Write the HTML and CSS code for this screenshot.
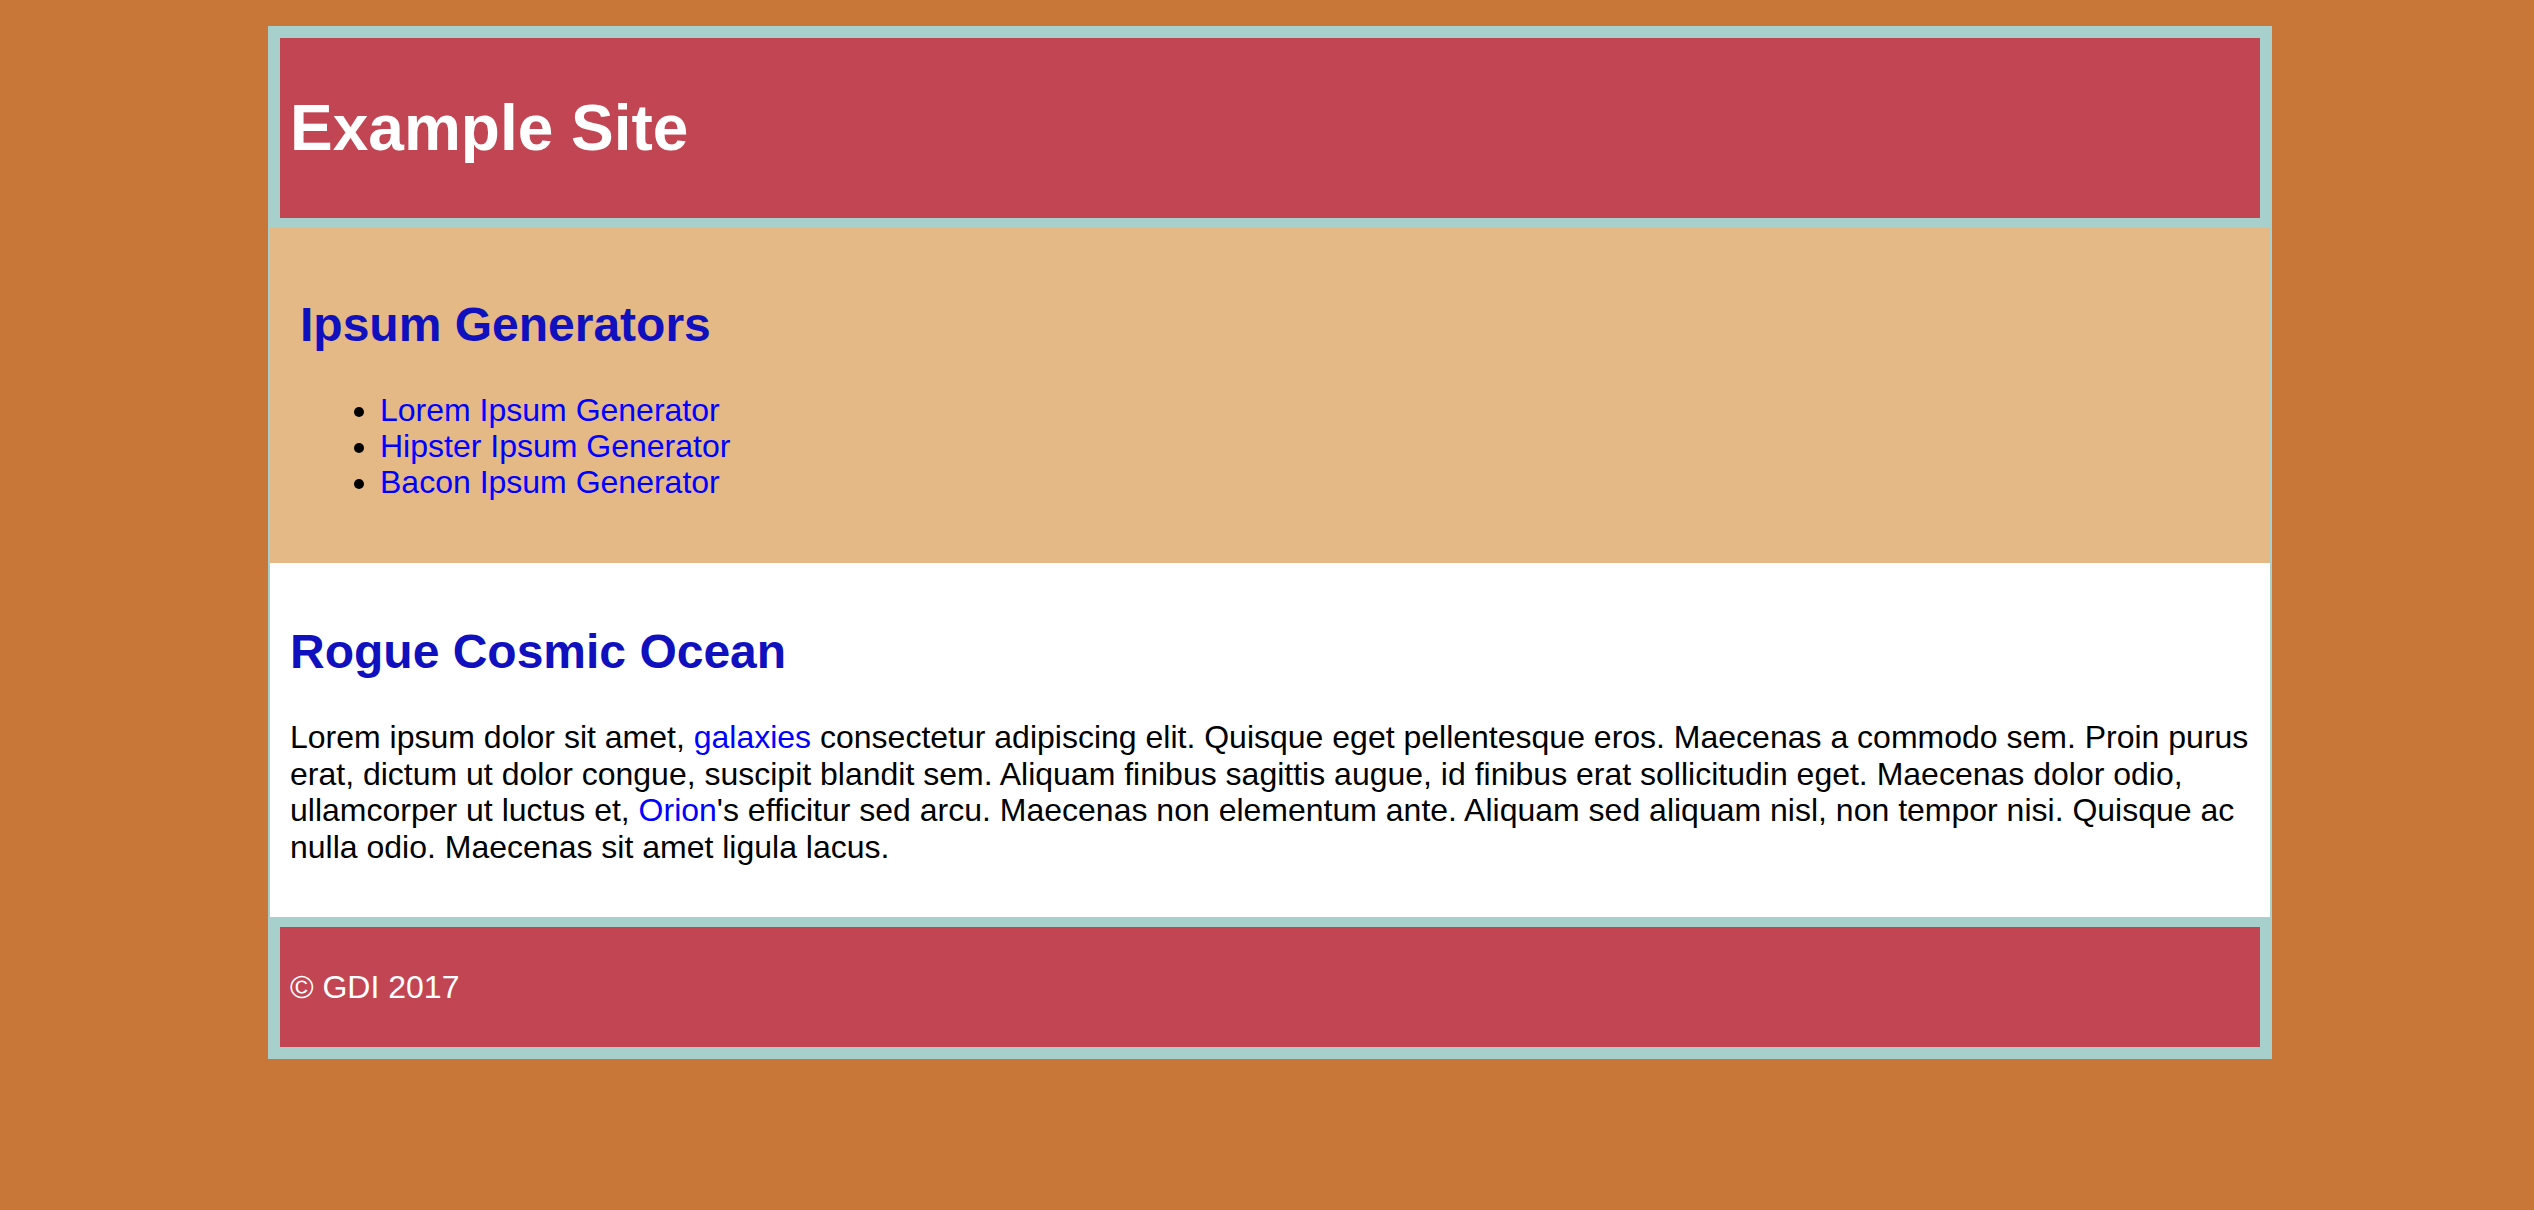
FILE: index.html
```html
<!DOCTYPE html>
<html lang="en">
<head>
<meta charset="utf-8">
<title>Example Site</title>
<link rel="stylesheet" href="styles.css">
</head>
<body>
<div class="page">
  <header class="site-header">
    <h1 class="site-title">Example Site</h1>
  </header>
  <nav class="site-nav">
    <h2 class="section-title">Ipsum Generators</h2>
    <ul class="nav-list">
      <li><a href="#">Lorem Ipsum Generator</a></li>
      <li><a href="#">Hipster Ipsum Generator</a></li>
      <li><a href="#">Bacon Ipsum Generator</a></li>
    </ul>
  </nav>
  <main class="site-main">
    <h2 class="section-title">Rogue Cosmic Ocean</h2>
    <p class="body-text">Lorem ipsum dolor sit amet, <a href="#">galaxies</a> consectetur adipiscing elit. Quisque eget pellentesque eros. Maecenas a commodo sem. Proin purus erat, dictum ut dolor congue, suscipit blandit sem. Aliquam finibus sagittis augue, id finibus erat sollicitudin eget. Maecenas dolor odio, ullamcorper ut luctus et, <a href="#">Orion</a>'s efficitur sed arcu. Maecenas non elementum ante. Aliquam sed aliquam nisl, non tempor nisi. Quisque ac nulla odio. Maecenas sit amet ligula lacus.</p>
  </main>
  <footer class="site-footer">
    <p class="copyright">&copy; GDI 2017</p>
  </footer>
</div>
</body>
</html>
```
FILE: styles.css
```css
html, body {
  margin: 0;
  padding: 0;
}

body {
  background: #c97639;
  font-family: "Liberation Sans", Arial, Helvetica, sans-serif;
  font-size: 32px;
  line-height: 36px;
  color: #000;
  min-height: 1210px;
}

.page {
  width: 2000px;
  margin: 26px 0 0 268px;
  border: 2px solid #a7d0cd;
}

.site-header,
.site-footer {
  background: #c24554;
  border: 10px solid #a7d0cd;
  padding: 10px;
  color: #fff;
}

.site-title {
  font-size: 64px;
  line-height: 74px;
  font-weight: bold;
  margin: 43px 0;
}

.site-nav {
  background: #e4b985;
  padding: 30px 30px 31px;
}

.site-main {
  background: #fff;
  padding: 22px 20px 20px;
}

.section-title {
  font-size: 48px;
  line-height: 54px;
  font-weight: bold;
  color: #1010be;
  margin: 40px 0;
}

.nav-list {
  margin: 32px 0;
  padding-left: 80px;
}

.nav-list li {
  line-height: 36px;
}

a {
  color: #0000ff;
  text-decoration: none;
}

.body-text {
  margin: 32px 0;
  line-height: 36.5px;
}

.copyright {
  margin: 32px 0;
}
```
